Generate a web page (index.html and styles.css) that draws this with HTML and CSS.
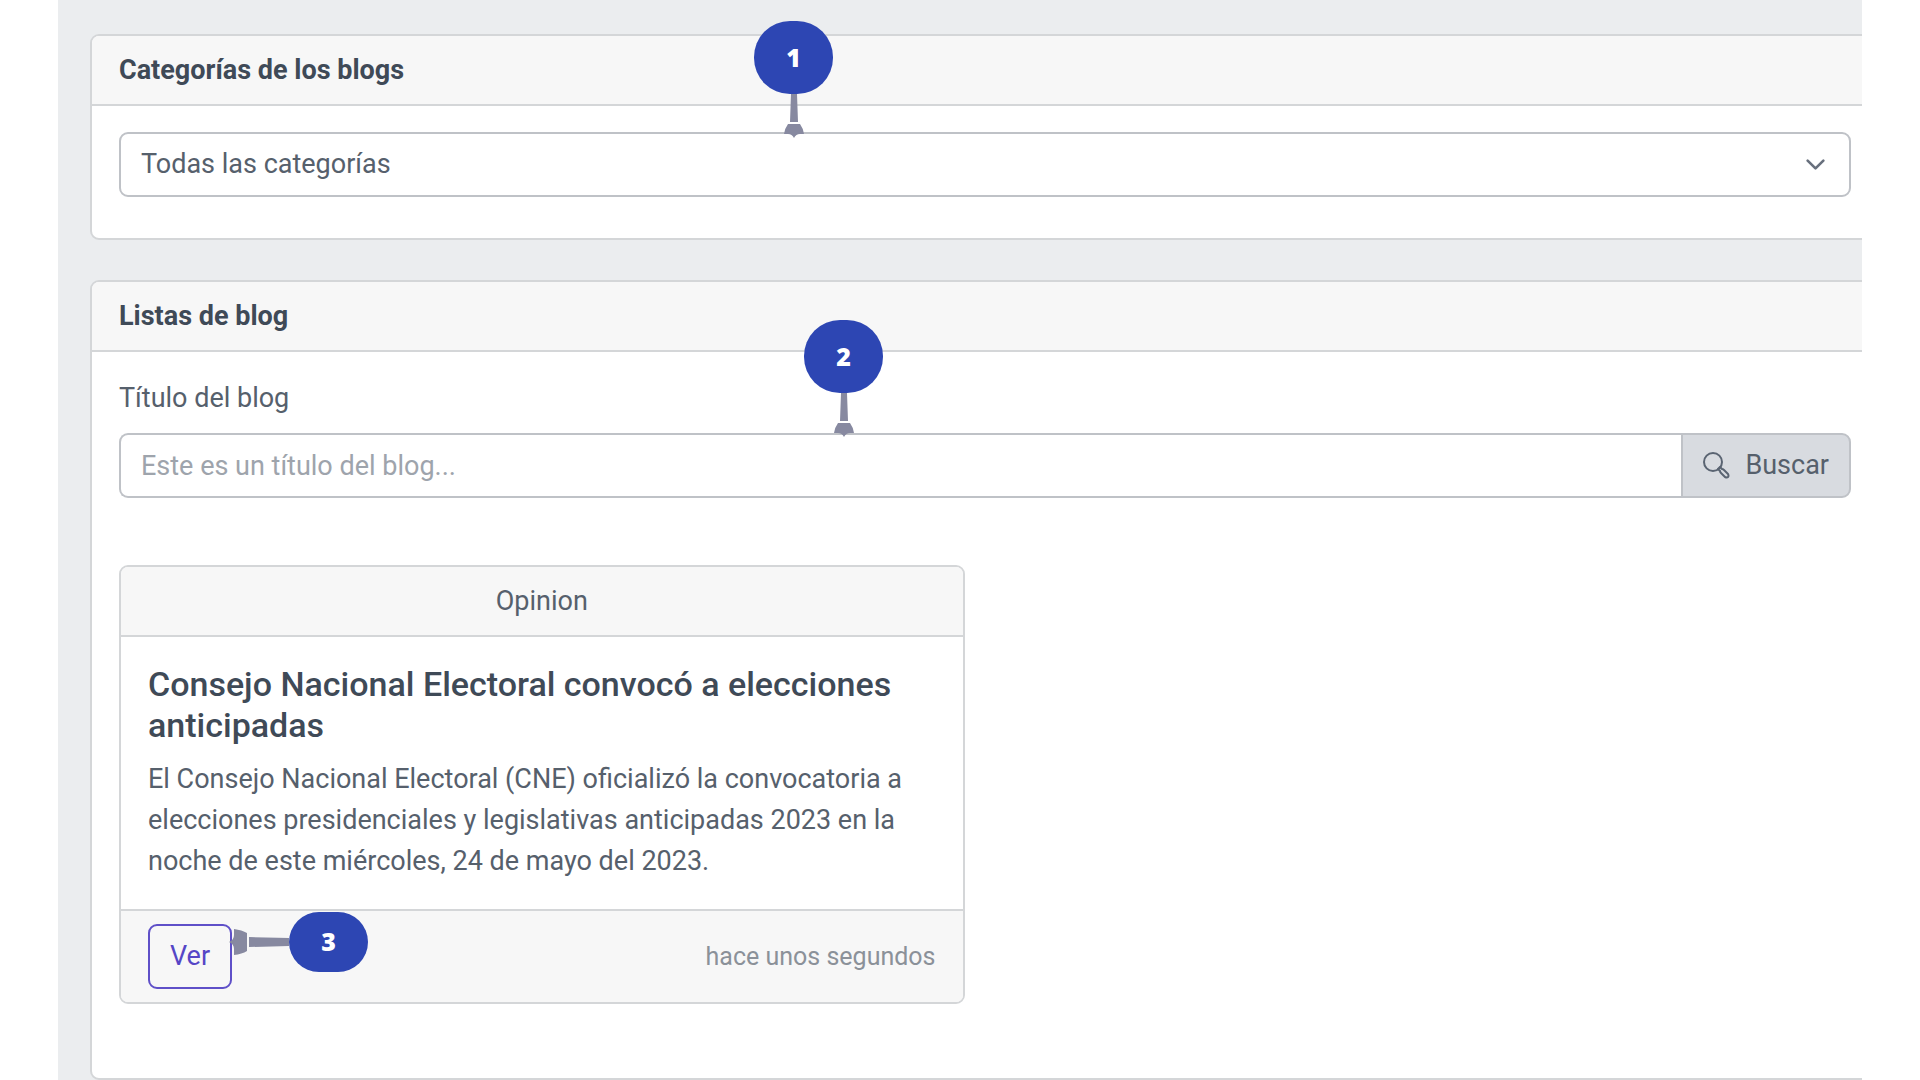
FILE: index.html
```html
<!DOCTYPE html>
<html lang="es">
<head>
<meta charset="utf-8">
<meta name="viewport" content="width=device-width, initial-scale=1">
<title>Blogs</title>
<link rel="stylesheet" href="styles.css">
</head>
<body>
<main class="page">
  <section class="card">
    <h2 class="card-header"><label for="category">Categorías de los blogs</label></h2>
    <div class="card-body">
      <div class="select-wrap">
        <select id="category" class="control select">
          <option>Todas las categorías</option>
        </select>
        <svg class="chevron" viewBox="0 0 16 16" aria-hidden="true"><path d="M2 5l6 6 6-6" fill="none" stroke="#68707d" stroke-width="2" stroke-linecap="round" stroke-linejoin="round"/></svg>
        <div class="pin pin-category">
          <span class="pin-number">1</span>
          <svg class="pin-stem" viewBox="0 0 20 44" aria-hidden="true"><path d="M7 0h6l1 28H6zM4 30h12q3 4 4 10h-4q-4 0-6 4q-2-4-6-4H0q1-6 4-10z" fill="#8789a0"/></svg>
        </div>
      </div>
    </div>
  </section>

  <section class="card">
    <h2 class="card-header">Listas de blog</h2>
    <div class="card-body">
      <label class="field-label" for="title">Título del blog</label>
      <form class="search">
        <input id="title" class="control search-input" type="text" placeholder="Este es un título del blog...">
        <button class="search-button" type="button">
          <svg class="search-icon" viewBox="0 0 27 27" aria-hidden="true"><g fill="none" stroke="#5a6472" stroke-width="2"><circle cx="10" cy="10" r="9"/><path d="M15 17l2-2 2 2q1 0 2 1l4 4q1 2 0 3q-1 1-3 0l-4-4q-1-1-1-2z" stroke-linejoin="round"/></g></svg>
          Buscar
        </button>
        <div class="pin pin-search">
          <span class="pin-number">2</span>
          <svg class="pin-stem" viewBox="0 0 20 44" aria-hidden="true"><path d="M7 0h6l1 28H6zM4 30h12q3 4 4 10h-4q-4 0-6 4q-2-4-6-4H0q1-6 4-10z" fill="#8789a0"/></svg>
        </div>
      </form>

      <div class="posts">
        <article class="post">
          <header class="post-category">Opinion</header>
          <div class="post-body">
            <h3 class="post-title">Consejo Nacional Electoral convocó a elecciones anticipadas</h3>
            <p class="post-text">El Consejo Nacional Electoral (CNE) oficializó la convocatoria a elecciones presidenciales y legislativas anticipadas 2023 en la noche de este miércoles, 24 de mayo del 2023.</p>
          </div>
          <footer class="post-footer">
            <div class="post-action">
              <button class="view-button" type="button">Ver</button>
              <div class="pin pin-view">
                <svg class="pin-stem-side" viewBox="0 0 60 26" aria-hidden="true"><path d="M60 9v8l-40 1V8zM18 4v18q-5 3-13 4v-6q0-5-5-7q5-2 5-7V0q8 1 13 4z" fill="#8789a0"/></svg>
                <span class="pin-number pin-number-low">3</span>
              </div>
            </div>
            <small class="post-time">hace unos segundos</small>
          </footer>
        </article>
      </div>
    </div>
  </section>
</main>
</body>
</html>
```
FILE: styles.css
```css
* {
  box-sizing: border-box;
}

body {
  margin: 0;
  background: #fff;
  color: #56606c;
  font-family: Roboto, "Liberation Sans", sans-serif;
  font-size: 27px;
  line-height: 41px;
}

/* The cards run past the right edge of the page area and are clipped there. */
.page {
  display: flex;
  flex-direction: column;
  gap: 40px;
  margin: 0 58px;
  padding: 34px 0 0 32px;
  overflow: hidden;
  background: #ebedef;
}

.card {
  margin-right: -18px;
  border: 2px solid #d4d6d8;
  border-radius: 9px;
  background: #fff;
}

.card-header {
  margin: 0;
  padding: 14px 27px 13px;
  border-bottom: 2px solid #d4d6d8;
  border-radius: 7px 7px 0 0;
  background: #f7f7f7;
  color: #3f4a57;
  font-size: 27px;
  font-weight: 700;
}

.card-body {
  padding: 26px 27px 41px;
}

.control {
  height: 65px;
  border: 2px solid #bfc2c7;
  border-radius: 9px;
  background: #fff;
  color: #56606c;
  font: inherit;
}

.select-wrap {
  position: relative;
}

.select {
  display: block;
  width: 100%;
  padding: 0 60px 0 20px;
  appearance: none;
}

.chevron {
  position: absolute;
  top: 22px;
  right: 25px;
  width: 21px;
  height: 21px;
}

.field-label {
  display: block;
  margin-bottom: 14px;
}

.search {
  display: flex;
  position: relative;
}

.search-input {
  flex: 1;
  min-width: 0;
  padding: 0 20px;
  border-right: 0;
  border-radius: 9px 0 0 9px;
}

.search-input::placeholder {
  color: #9ea4ac;
  opacity: 1;
}

.search-button {
  display: flex;
  align-items: center;
  gap: 15px;
  padding: 0 20px;
  border: 2px solid #bfc2c7;
  border-radius: 0 9px 9px 0;
  background: #d8dbe0;
  color: #56606c;
  font: inherit;
}

.search-icon {
  width: 27px;
  height: 27px;
}

.posts {
  display: grid;
  grid-template-columns: repeat(2, 1fr);
  gap: 41px;
  padding: 67px 0 33px;
}

.post {
  border: 2px solid #d4d6d8;
  border-radius: 9px;
  background: #fff;
}

.post-category {
  padding: 14px 27px 13px;
  border-bottom: 2px solid #d4d6d8;
  border-radius: 7px 7px 0 0;
  background: #f7f7f7;
  text-align: center;
}

.post-body {
  padding: 27px;
}

.post-title {
  margin: 0 0 13px;
  color: #3f4a57;
  font-size: 34px;
  font-weight: 500;
  line-height: 41px;
}

.post-text {
  margin: 0;
}

.post-footer {
  display: flex;
  align-items: center;
  justify-content: space-between;
  padding: 13px 27px;
  border-top: 2px solid #d4d6d8;
  border-radius: 0 0 7px 7px;
  background: #f7f7f7;
}

.post-action {
  position: relative;
}

.view-button {
  display: block;
  height: 65px;
  padding: 0 20px;
  border: 2px solid #5f50c8;
  border-radius: 9px;
  background: transparent;
  color: #5546c6;
  font: inherit;
}

.post-time {
  color: #8b9199;
  font-size: 25px;
}

/* Numbered callouts laid over the controls they point at. */
.pin {
  display: flex;
  position: absolute;
  align-items: center;
}

.pin-category,
.pin-search {
  flex-direction: column;
}

.pin-category {
  bottom: 59px;
  left: 635px;
}

.pin-search {
  bottom: 61px;
  left: 685px;
}

.pin-view {
  top: -12px;
  left: 81px;
}

.pin-number {
  width: 79px;
  height: 73px;
  border-radius: 36px;
  background: #2d46b3;
  color: #fff;
  font-family: "Open Sans", sans-serif;
  font-size: 25px;
  font-weight: 800;
  line-height: 72px;
  text-align: center;
}

.pin-number-low {
  height: 60px;
  border-radius: 30px;
  line-height: 58px;
}

.pin-stem {
  width: 20px;
  height: 44px;
}

.pin-stem-side {
  width: 60px;
  height: 26px;
}
```
